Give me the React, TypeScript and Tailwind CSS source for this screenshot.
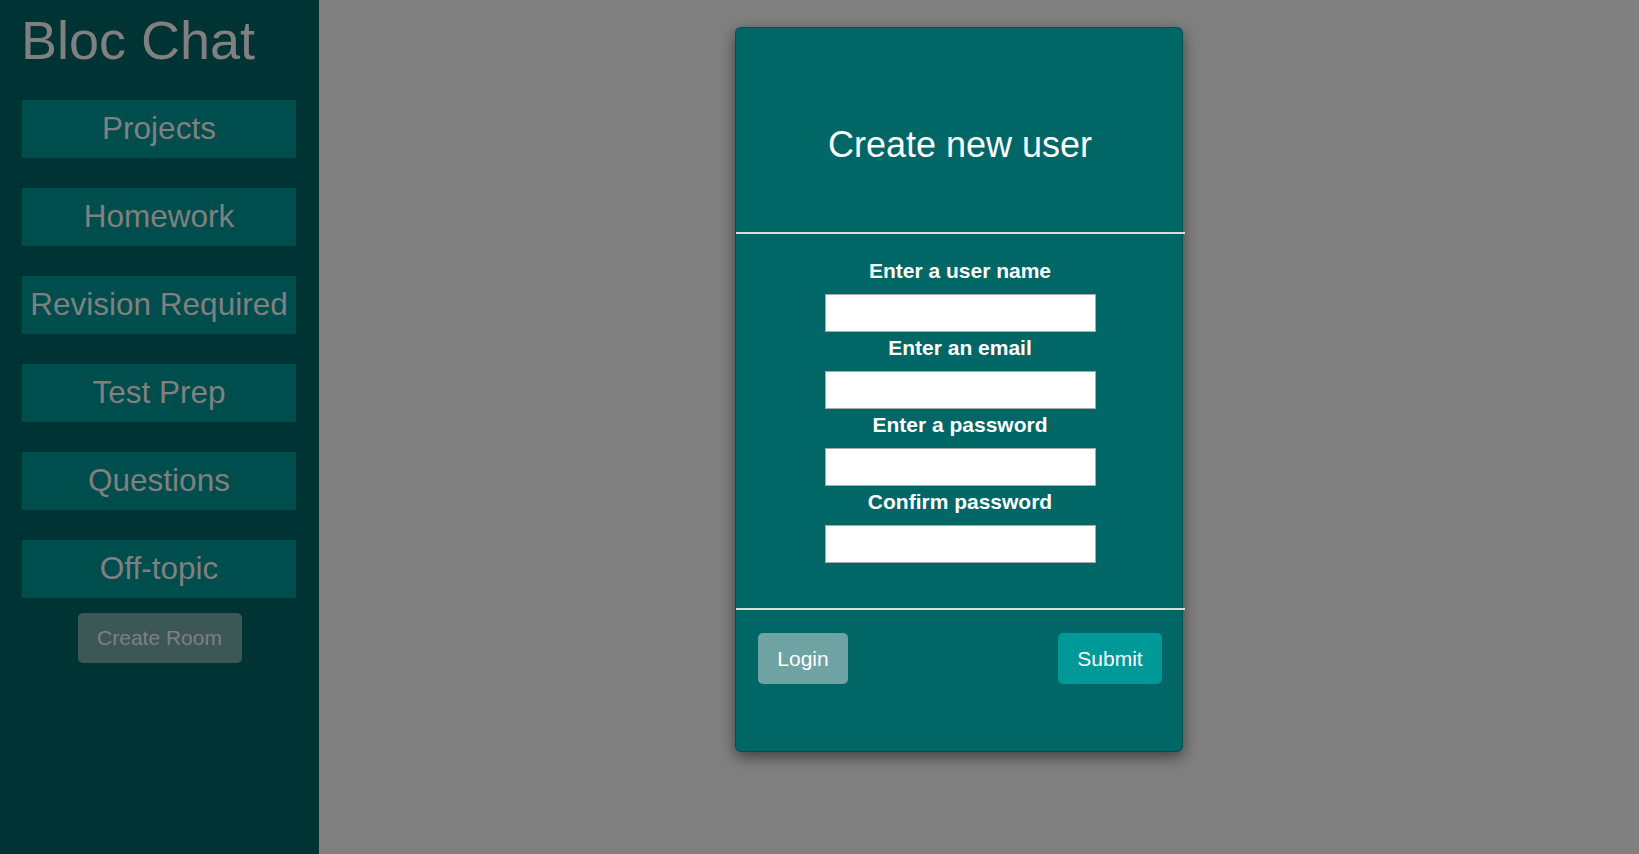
const rooms = ['Projects', 'Homework', 'Revision Required', 'Test Prep', 'Questions', 'Off-topic']

const fields = ['Enter a user name', 'Enter an email', 'Enter a password', 'Confirm password']

const Sidebar = () => {
  return (
    <aside className="w-[319px] shrink-0 bg-[#003333] min-h-screen">
      <h1 className="ml-[21px] pt-[9px] text-[54px] leading-[62px] text-[#808080]">Bloc Chat</h1>
      <ul className="mt-[29px] flex flex-col gap-[30px] pl-[22px] pr-[23px]">
        {rooms.map((room) => (
          <li
            key={room}
            className="h-[58px] flex items-center justify-center bg-[#004d4d] text-[31.5px] text-[#808080] whitespace-nowrap"
          >
            {room}
          </li>
        ))}
      </ul>
      <div className="flex justify-center mt-[15px]">
        <button className="w-[164px] h-[50px] rounded-[5px] bg-[#3d5656] text-[21px] text-[#808080]">
          Create Room
        </button>
      </div>
    </aside>
  )
}

const SignUpModal = () => {
  return (
    <div className="w-[448px] h-[725px] bg-[#006666] rounded-[6px] border border-[rgba(0,0,0,0.2)] shadow-[0_5px_15px_rgba(0,0,0,0.5)]">
      <div className="h-[204px] pt-[96px] pl-[2px] text-center">
        <h2 className="text-[36px] leading-[41px] text-white">Create new user</h2>
      </div>
      <hr className="border-0 h-[2px] bg-[#dddddd] mr-[-3px]" />
      <form className="h-[374px] pt-[25px] pl-[2px] flex flex-col items-center">
        {fields.map((label, i) => (
          <div key={label} className={'flex flex-col items-center ' + (i > 0 ? 'mt-[4px]' : '')}>
            <label className="font-bold text-[21px] leading-[24px] text-white">{label}</label>
            <input
              type={i >= 2 ? 'password' : 'text'}
              className="mt-[11px] w-[271px] h-[38px] bg-white border border-[#a9a9a9]"
            />
          </div>
        ))}
      </form>
      <hr className="border-0 h-[2px] bg-[#dddddd] mr-[-3px]" />
      <div className="flex justify-between pt-[23px] pl-[22px] pr-[20px]">
        <button className="w-[90px] h-[51px] rounded-[5px] bg-[#6fa3a3] text-[21px] text-white">Login</button>
        <button className="w-[104px] h-[51px] rounded-[5px] bg-[#009999] text-[21px] text-white">Submit</button>
      </div>
    </div>
  )
}

const App = () => {
  return (
    <div className="flex min-h-screen bg-[#808080] font-['Liberation_Sans',Arial,sans-serif]">
      <Sidebar />
      <main className="flex-1 pt-[27px] pl-[416px]">
        <SignUpModal />
      </main>
    </div>
  )
}
export default App
